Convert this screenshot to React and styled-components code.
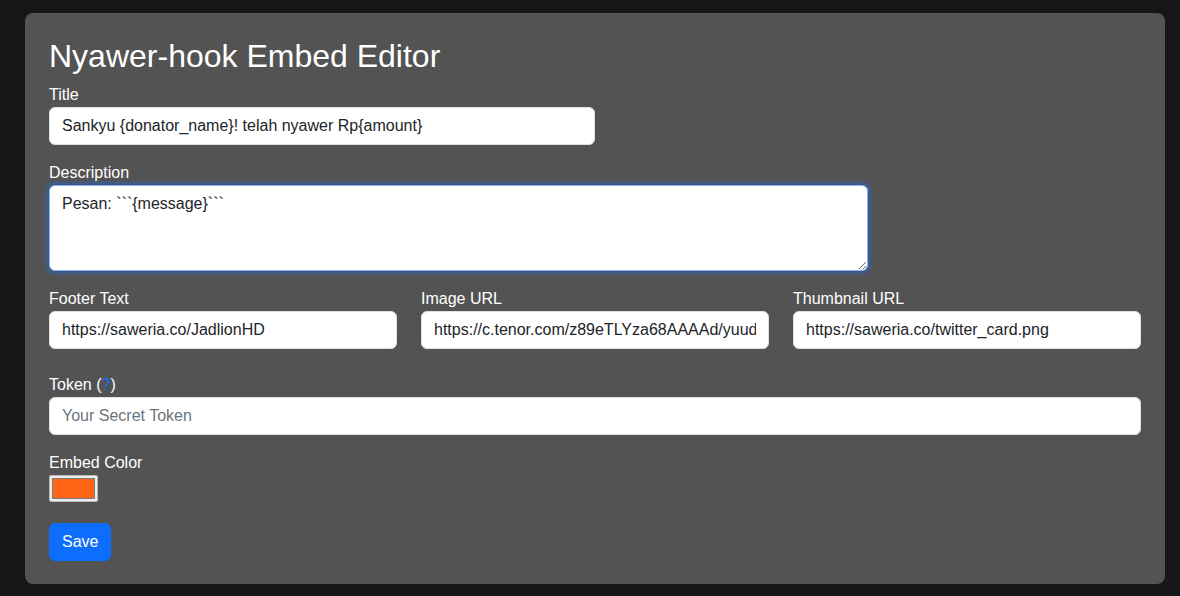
import React, { useEffect, useRef } from "react";
import styled, { createGlobalStyle, css } from "styled-components";

const Global = createGlobalStyle`
  * { box-sizing: border-box; }
  html, body { margin: 0; padding: 0; }
  body {
    background: #161616;
    font-family: "Liberation Sans", Arial, sans-serif;
    font-size: 16px;
    line-height: 1.5;
    color: #fff;
  }
`;

const Page = styled.div`
  padding: 13px 15px 12px 25px;
`;

const Card = styled.form`
  width: 1140px;
  background: #535353;
  border-radius: 8px;
  padding: 24px 24px 23px;
  display: flex;
  flex-direction: column;
`;

const Heading = styled.h1`
  margin: 0 0 8px;
  font-size: 32px;
  font-weight: 500;
  line-height: 1.2;
  color: #fff;
`;

const Field = styled.div`
  display: flex;
  flex-direction: column;
  margin-bottom: ${(p) => p.$mb ?? 16}px;
  width: ${(p) => p.$width || "auto"};
`;

const Label = styled.label`
  display: block;
  line-height: 24px;
  color: #fff;
`;

const Help = styled.a`
  color: #0d6efd;
  text-decoration: none;
`;

const fieldBase = css`
  display: block;
  width: 100%;
  padding: 6px 12px;
  font-family: "Liberation Sans", Arial, sans-serif;
  font-size: 16px;
  line-height: 24px;
  color: #212529;
  background: #fff;
  border: 1px solid #dee2e6;
  border-radius: 6px;
  outline: none;
  &::placeholder { color: #6c757d; }
`;

const TextInput = styled.input`
  ${fieldBase}
  height: 38px;
`;

const TextArea = styled.textarea`
  ${fieldBase}
  height: 86px;
  resize: vertical;
  ${(p) =>
    p.$focused &&
    css`
      border-color: #86b7fe;
      box-shadow: 0 0 0 4px rgba(13, 110, 253, 0.25);
    `}
  &:focus {
    border-color: #86b7fe;
    box-shadow: 0 0 0 4px rgba(13, 110, 253, 0.25);
  }
`;

const Row = styled.div`
  display: grid;
  grid-template-columns: repeat(3, 1fr);
  column-gap: 24px;
  margin-bottom: 8px;
`;

const ColorSwatch = styled.div`
  width: 49px;
  height: 27px;
  border: 1px solid #b8b8b8;
  background: #efefef;
  padding: 2px;
  border-radius: 2px;
`;

const ColorFill = styled.div`
  width: 100%;
  height: 100%;
  background: ${(p) => p.$color};
  border: 1px solid #7a7a7a;
`;

const Actions = styled.div`
  display: flex;
  margin-top: 5px;
`;

const Button = styled.button`
  font-family: "Liberation Sans", Arial, sans-serif;
  font-size: 16px;
  line-height: 24px;
  padding: 6px 12px;
  color: #fff;
  background: #0d6efd;
  border: 1px solid #0d6efd;
  border-radius: 6px;
  cursor: pointer;
`;

export default function App() {
  const ref = useRef(null);
  useEffect(() => {
    const el = ref.current;
    if (el) {
      el.focus();
      const n = el.value.length;
      el.setSelectionRange(n, n);
    }
  }, []);

  return (
    <Page>
      <Global />
      <Card onSubmit={(e) => e.preventDefault()}>
        <Heading>Nyawer-hook Embed Editor</Heading>

        <Field $width="546px">
          <Label htmlFor="title">Title</Label>
          <TextInput
            id="title"
            defaultValue="Sankyu {donator_name}! telah nyawer Rp{amount}"
          />
        </Field>

        <Field $width="819px">
          <Label htmlFor="desc">Description</Label>
          <TextArea
            id="desc"
            ref={ref}
            $focused
            rows={3}
            spellCheck
            defaultValue={"Pesan: ```{message}```"}
          />
        </Field>

        <Row>
          <Field>
            <Label htmlFor="footer">Footer Text</Label>
            <TextInput id="footer" defaultValue="https://saweria.co/JadlionHD" />
          </Field>
          <Field>
            <Label htmlFor="image">Image URL</Label>
            <TextInput
              id="image"
              defaultValue="https://c.tenor.com/z89eTLYza68AAAAd/yuudachi-kancolle.gif"
            />
          </Field>
          <Field>
            <Label htmlFor="thumb">Thumbnail URL</Label>
            <TextInput
              id="thumb"
              defaultValue="https://saweria.co/twitter_card.png"
            />
          </Field>
        </Row>

        <Field>
          <Label htmlFor="token">
            Token (<Help href="#">?</Help>)
          </Label>
          <TextInput id="token" type="password" placeholder="Your Secret Token" />
        </Field>

        <Field $mb={16}>
          <Label>Embed Color</Label>
          <ColorSwatch>
            <ColorFill $color="#ff6516" />
          </ColorSwatch>
        </Field>

        <Actions>
          <Button type="submit">Save</Button>
        </Actions>
      </Card>
    </Page>
  );
}
